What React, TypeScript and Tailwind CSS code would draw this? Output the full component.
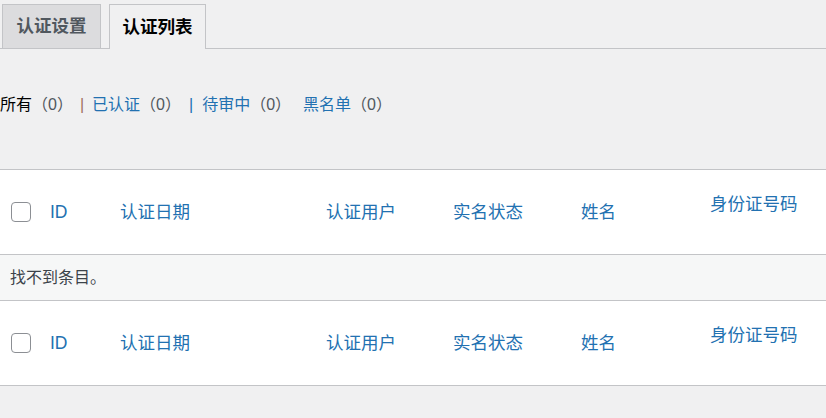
const font = { fontFamily: '"Liberation Sans", "Noto Sans CJK SC", sans-serif' };

function Checkbox() {
    return <span className="block w-[20px] h-[20px] rounded-[4px] border border-[#8c8f94] bg-white" />;
}

function HeaderRow() {
    return (
        <div className="flex items-center h-[84px] bg-white text-[17.5px] text-[#2271b1]">
            <div className="w-[50px] pl-[11px]">
                <Checkbox />
            </div>
            <div className="w-[70px]">ID</div>
            <div className="w-[206px]">认证日期</div>
            <div className="w-[127px]">认证用户</div>
            <div className="w-[128px]">实名状态</div>
            <div className="w-[129px]">姓名</div>
            <div className="flex-1 mb-[16px] whitespace-nowrap">身份证号码</div>
        </div>
    );
}

export default function App() {
    return (
        <div className="min-h-[418px] bg-[#f0f0f1] overflow-hidden" style={font}>
            <div className="flex items-end gap-[8px] pt-[4px] pl-[2px] border-b border-[#c3c4c7]">
                <div className="w-[99px] h-[44px] flex items-center justify-center bg-[#dcdcde] border border-b-0 border-[#c3c4c7] text-[17.5px] font-bold text-[#50575e]">
                    认证设置
                </div>
                <div className="w-[97px] h-[45px] -mb-px flex items-center justify-center bg-[#f0f0f1] border border-b-0 border-[#c3c4c7] text-[17.5px] font-bold text-black">
                    认证列表
                </div>
            </div>

            <div className="flex items-center h-[32px] mt-[40px] text-[16px] whitespace-nowrap">
                <span className="text-black">所有</span>
                <span className="text-[#50575e]">（0）</span>
                <span className="ml-[7px] mr-[8px] text-[#a0705e]">|</span>
                <span className="text-[#2271b1]">已认证</span>
                <span className="text-[#50575e]">（0）</span>
                <span className="ml-[8px] mr-[9px] text-[#2271b1]">|</span>
                <span className="text-[#2271b1]">待审中</span>
                <span className="text-[#50575e]">（0）</span>
                <span className="ml-[12px] text-[#2271b1]">黑名单</span>
                <span className="text-[#50575e]">（0）</span>
            </div>

            <div className="mt-[48px] border-y border-[#c3c4c7]">
                <HeaderRow />
                <div className="flex items-center h-[47px] pl-[10px] bg-[#f6f7f7] border-y border-[#c3c4c7] text-[16px] text-[#3c434a]">
                    找不到条目。
                </div>
                <HeaderRow />
            </div>
        </div>
    );
}
